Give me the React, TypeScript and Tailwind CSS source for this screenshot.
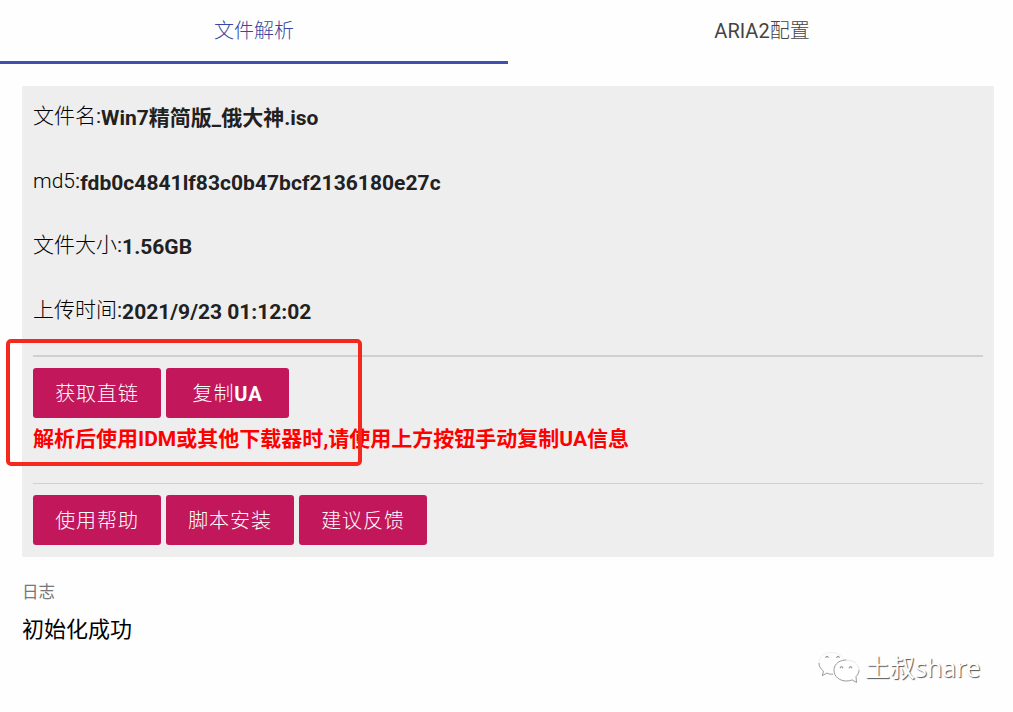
import type { ReactNode } from "react";

const Tab = ({ active, children }: { active?: boolean; children: ReactNode }) => (
  <button
    className={`w-[508px] shrink-0 h-16 text-[20px] leading-[58px] border-b-[3px] ${
      active ? "border-[#3f51b0] text-[#3848a0]" : "border-transparent text-[#444]"
    }`}
  >
    {children}
  </button>
);

const InfoRow = ({ label, className = "h-[65px]", children }: { label: string; className?: string; children: ReactNode }) => (
  <p className={`leading-[30px] whitespace-nowrap flex ${className}`}>
    <span className="font-light text-black">{label}</span>
    <span>:</span>
    <strong className="font-bold pt-0.5">{children}</strong>
  </p>
);

const ActionButton = ({ className = "w-32", children }: { className?: string; children: ReactNode }) => (
  <button className={`h-[50px] rounded-[3px] bg-[#c2185b] text-white font-light text-[20px] tracking-[0.9px] leading-[50px] pt-px ${className}`}>
    {children}
  </button>
);

const WeChatIcon = () => (
  <svg width="42" height="34" viewBox="0 0 42 34" fill="none" stroke="#999" strokeWidth="1">
    <path d="M15 23.2c-2.3.2-4.4-.2-6.2-1.1L4.3 24.7l1.2-4.5C2.7 18.1 1 15.3 1 12" />
    <path d="M1 12C1 6 6.3 1.5 13 1.5S25 5.5 26 9.500" stroke="#f0f0f0" />
    <path d="M16.5 16c-.3 1-.5 2.2-.5 3.5C16 25.5 21.5 30 28.5 30c2.1 0 4-.4 5.7-1.1l4.3 2.600-.5-6c1.9-1.7 3-4 3-6.5" fill="white" />
    <path d="M16.5 16c1.5-4.4 6.300-7 12-7" />
    <path d="M28.5 9C35.5 9 41 13.5 41 19" stroke="#e8e8e8" />
    <path d="M7.5 6.8q1.5-3 3 0M18.5 6.8q1.5-3 3 0M22 17.2q1.5-3 3 0M31 17.2q1.5-3 3 0" strokeWidth="1.2" />
  </svg>
);

const App = () => {
  return (
    <div className="relative h-[712px] w-[1013px] overflow-hidden bg-[#fefefe] text-[#212121] font-['Roboto','Noto_Sans_CJK_SC',sans-serif]">
      <nav className="flex overflow-hidden">
        <Tab active>
          <span className="font-light">文件解析</span>
        </Tab>
        <Tab>
          ARIA2<span className="font-light">配置</span>
        </Tab>
      </nav>

      <main className="ml-[22px] mt-[22px] w-[972px] h-[471px] bg-[#eee] px-[11px] pt-[15px] rounded-[2px] text-[21px]">
        <InfoRow label="文件名">Win7精简版_俄大神.iso</InfoRow>
        <InfoRow label="md5" className="h-16 tracking-[0.04px]">fdb0c4841lf83c0b47bcf2136180e27c</InfoRow>
        <InfoRow label="文件大小">1.56GB</InfoRow>
        <InfoRow label="上传时间">2021/9/23 01:12:02</InfoRow>

        <hr className="-mt-[5px] border-t-2 border-[#d0d0d0]" />
        <div className="mt-[11px] flex gap-[5px]">
          <ActionButton>获取直链</ActionButton>
          <ActionButton className="w-[123px]">
            复制<b className="font-bold">UA</b>
          </ActionButton>
        </div>
        <p className="mt-[6px] h-[59px] leading-[30px] font-bold text-[#f00] whitespace-nowrap">
          解析后使用IDM或其他下载器时,请使用上方按钮手动复制UA信息
        </p>
        <hr className="border-t border-[#d0d0d0]" />
        <div className="mt-[11px] flex gap-[5px]">
          <ActionButton>使用帮助</ActionButton>
          <ActionButton>脚本安装</ActionButton>
          <ActionButton>建议反馈</ActionButton>
        </div>
      </main>

      <section className="ml-[22px] mt-[23px]">
        <h2 className="text-[16.5px] leading-[26px] text-[#777]">日志</h2>
        <p className="mt-2 text-[22px] leading-[32px] text-black">初始化成功</p>
      </section>

      {/* Highlight around the main actions */}
      <div className="absolute left-[6px] top-[339px] w-[356px] h-[127px] border-4 border-[#f5281e] rounded-[5px]" />

      <div className="absolute left-[818px] top-[651px] flex items-center">
        <WeChatIcon />
        <span className="ml-[5px] -mt-0.5 text-[25px] leading-[34px] text-white font-['Open_Sans','Noto_Sans_CJK_SC',sans-serif] [text-shadow:1px_1px_1px_#555]">
          土叔share
        </span>
      </div>
    </div>
  );
};

export default App;
